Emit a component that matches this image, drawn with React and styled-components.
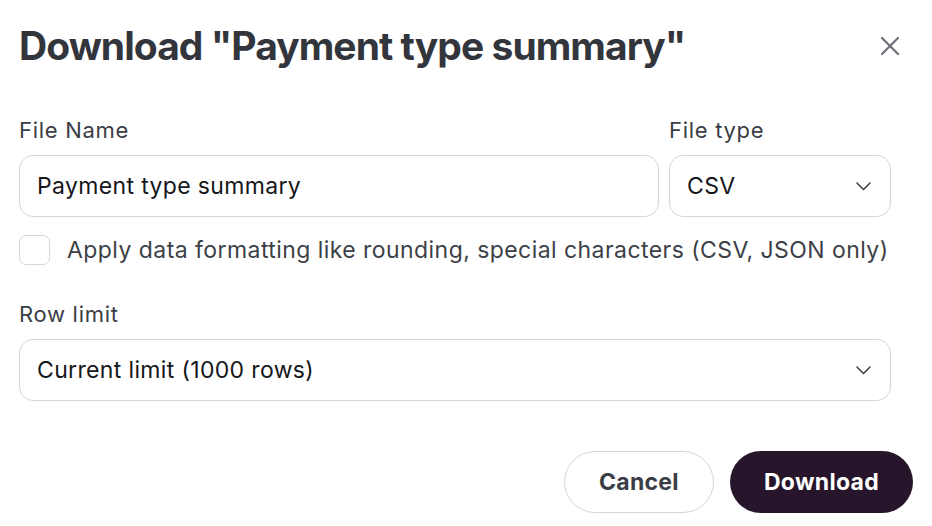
import React from "react";
import styled, { createGlobalStyle } from "styled-components";

const Global = createGlobalStyle`
  html, body { margin: 0; padding: 0; background: #fff; }
  body { font-family: Inter, "Noto Sans", sans-serif; -webkit-font-smoothing: antialiased; }
  * { box-sizing: border-box; }
`;

const Dialog = styled.div`
  width: 932px;
  height: 526px;
  padding: 22px 19px 0 19px;
  display: flex;
  flex-direction: column;
`;

const Header = styled.div`
  display: flex;
  align-items: center;
  justify-content: space-between;
  padding-right: 5px;
`;

const Title = styled.h1`
  margin: 0;
  font-size: 39px;
  line-height: 48px;
  font-weight: 700;
  color: #33353d;
  letter-spacing: -0.95px;
`;

const CloseButton = styled.button`
  border: none;
  background: transparent;
  padding: 0;
  width: 36px;
  height: 36px;
  display: flex;
  align-items: center;
  justify-content: center;
  color: #6c6f79;
  cursor: pointer;
`;

const Form = styled.div`
  width: 872px;
  margin-top: 48px;
  display: flex;
  flex-direction: column;
`;

const Row = styled.div`
  display: grid;
  grid-template-columns: 1fr 222px;
  column-gap: 10px;
`;

const Field = styled.div`
  display: flex;
  flex-direction: column;
  gap: 12px;
`;

const Label = styled.label`
  font-size: 22px;
  line-height: 25px;
  color: #3b3d45;
  letter-spacing: 0.7px;
`;

const Control = styled.div`
  height: 62px;
  border: 1.5px solid #d5d6db;
  border-radius: 14px;
  display: flex;
  align-items: center;
  justify-content: space-between;
  padding: 0 19px 0 17px;
  font-size: 23px;
  letter-spacing: 0.35px;
  color: #15161a;
  background: #fff;
`;

const CheckRow = styled.div`
  display: flex;
  align-items: center;
  gap: 17px;
  margin-top: 18px;
  margin-bottom: 37px;
`;

const Box = styled.span`
  width: 31px;
  height: 30px;
  border: 1.5px solid #d5d6db;
  border-radius: 7px;
  flex-shrink: 0;
`;

const CheckText = styled.span`
  font-size: 23px;
  color: #3d3f47;
  letter-spacing: 0.44px;
  white-space: nowrap;
`;

const Footer = styled.div`
  margin-top: 50px;
  display: flex;
  justify-content: flex-end;
  gap: 16px;
`;

const Button = styled.button`
  height: 62px;
  border-radius: 31px;
  font-family: Inter, "Noto Sans", sans-serif;
  font-size: 23px;
  letter-spacing: 0.3px;
  font-weight: 700;
  padding: 0 34px;
  border: ${(p) => (p.$primary ? "none" : "1.5px solid #d5d6db")};
  background: ${(p) => (p.$primary ? "#26152b" : "#fff")};
  color: ${(p) => (p.$primary ? "#fff" : "#3b3d45")};
  cursor: pointer;
`;

const Chevron = () => (
  <svg width="15" height="9" viewBox="0 0 15 9" fill="none">
    <path d="M1 1l6.5 6.5L14 1" stroke="#44464d" strokeWidth="1.6" strokeLinecap="round" strokeLinejoin="round" />
  </svg>
);

const XIcon = () => (
  <svg width="20" height="20" viewBox="0 0 20 20" fill="none">
    <path d="M2 2l16 16M18 2L2 18" stroke="currentColor" strokeWidth="2.2" strokeLinecap="round" />
  </svg>
);

export default function App() {
  return (
    <>
      <Global />
      <Dialog>
        <Header>
          <Title>Download "Payment type summary"</Title>
          <CloseButton aria-label="Close"><XIcon /></CloseButton>
        </Header>
        <Form>
          <Row>
            <Field>
              <Label>File Name</Label>
              <Control>Payment type summary</Control>
            </Field>
            <Field>
              <Label>File type</Label>
              <Control>CSV<Chevron /></Control>
            </Field>
          </Row>
          <CheckRow>
            <Box />
            <CheckText>Apply data formatting like rounding, special characters (CSV, JSON only)</CheckText>
          </CheckRow>
          <Field>
            <Label>Row limit</Label>
            <Control>Current limit (1000 rows)<Chevron /></Control>
          </Field>
        </Form>
        <Footer>
          <Button>Cancel</Button>
          <Button $primary>Download</Button>
        </Footer>
      </Dialog>
    </>
  );
}
